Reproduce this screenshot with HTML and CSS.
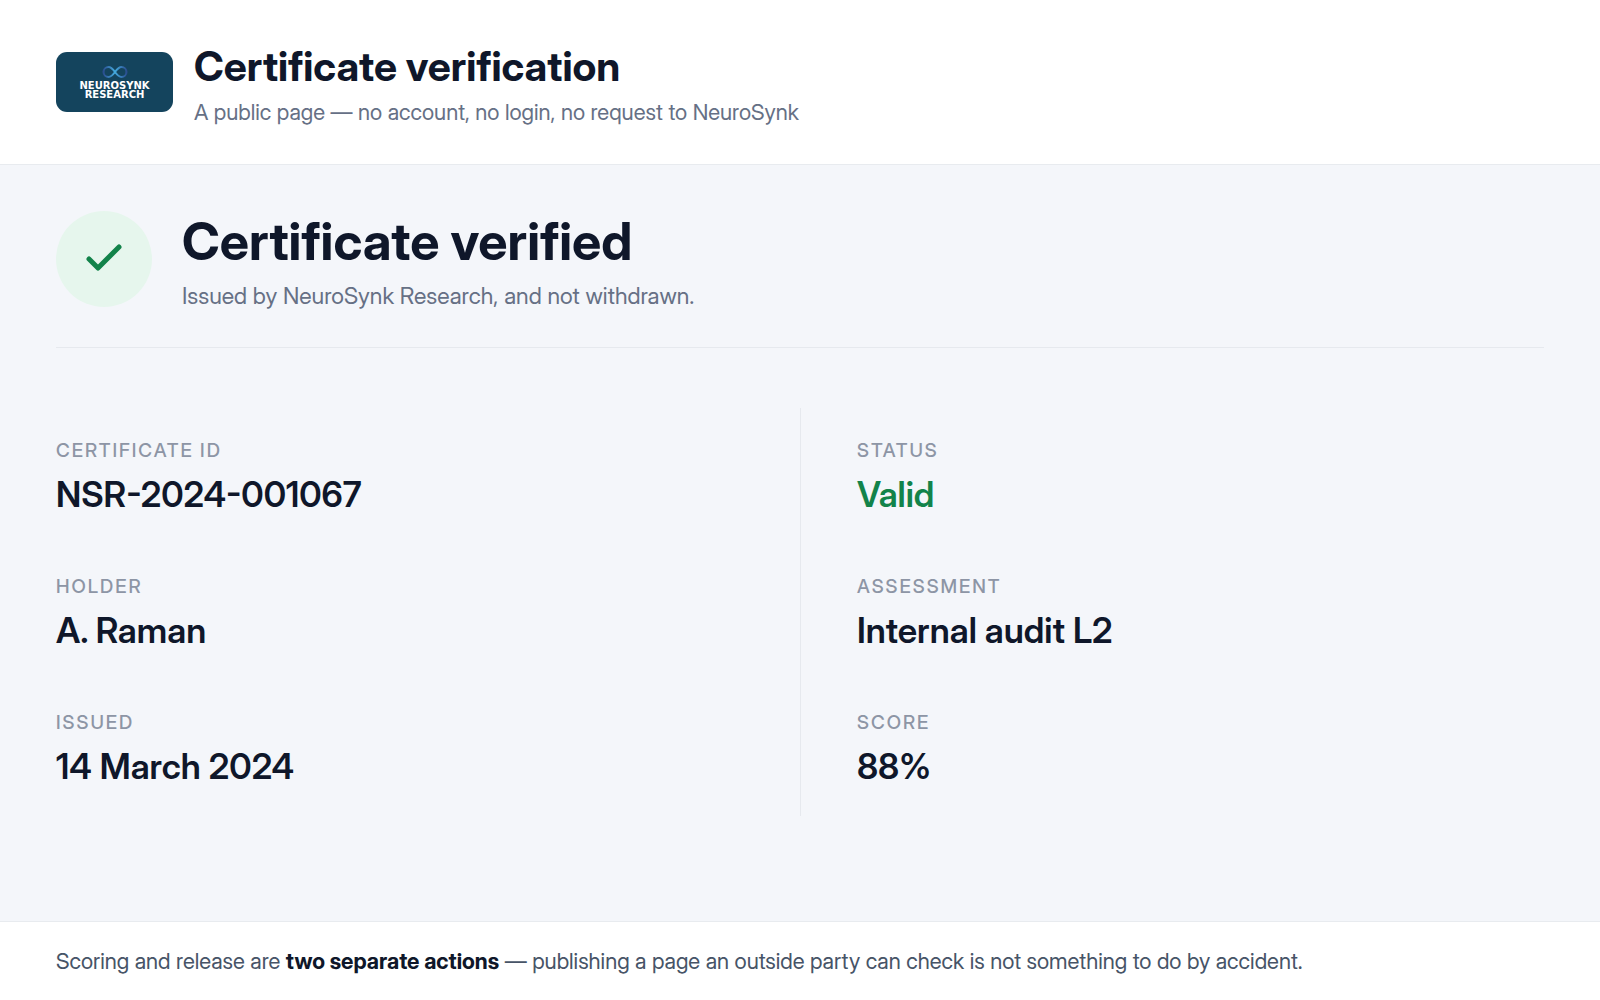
FILE: index.html
```html
<!DOCTYPE html>
<html lang="en">
<head>
    <meta charset="UTF-8">
    <meta name="viewport" content="width=device-width, initial-scale=1.0">
    <title>Certificate verification</title>
    <link rel="stylesheet" href="styles.css">
</head>

<body>
    <header class="site-header">
        <div class="logo">
            <svg class="logo-mark" viewBox="0 0 26 14" aria-hidden="true">
                <defs>
                    <linearGradient id="mark" x1="0" x2="1" y1="0" y2="0">
                        <stop offset="0" stop-color="#2b4f92"/>
                        <stop offset="0.5" stop-color="#45acdf"/>
                        <stop offset="1" stop-color="#2b4f92"/>
                    </linearGradient>
                </defs>
                <path d="M13 7C10 3 8.500 2 6.500 2a5 5 0 0 0 0 10C8.500 12 10 11 13 7s4.500-5 6.500-5a5 5 0 0 1 0 10C17.500 12 16 11 13 7Z" fill="none" stroke="url(#mark)" stroke-width="2"/>
            </svg>
            <span class="logo-text">NEUROSYNK<br>RESEARCH</span>
        </div>
        <div>
            <h1>Certificate verification</h1>
            <p class="tagline">A public page — no account, no login, no request to NeuroSynk</p>
        </div>
    </header>

    <main>
        <section class="result">
            <div class="result-icon">
                <svg viewBox="0 0 48 48" aria-hidden="true">
                    <path d="M9 24l9 9L39 12" fill="none" stroke="currentColor" stroke-width="5" stroke-linecap="round" stroke-linejoin="round"/>
                </svg>
            </div>
            <div>
                <h2>Certificate verified</h2>
                <p class="result-note">Issued by NeuroSynk Research, and not withdrawn.</p>
            </div>
        </section>

        <dl class="details">
            <div class="detail">
                <dt>Certificate ID</dt>
                <dd>NSR-2024-001067</dd>
            </div>
            <div class="detail">
                <dt>Status</dt>
                <dd class="valid">Valid</dd>
            </div>
            <div class="detail">
                <dt>Holder</dt>
                <dd>A. Raman</dd>
            </div>
            <div class="detail">
                <dt>Assessment</dt>
                <dd>Internal audit L2</dd>
            </div>
            <div class="detail">
                <dt>Issued</dt>
                <dd>14 March 2024</dd>
            </div>
            <div class="detail">
                <dt>Score</dt>
                <dd>88%</dd>
            </div>
        </dl>
    </main>

    <footer class="site-footer">
        <p>Scoring and release are <strong>two separate actions</strong> — publishing a page an outside party can check is not something to do by accident.</p>
    </footer>
</body>
</html>
```
FILE: styles.css
```css
* {
    box-sizing: border-box;
}

body {
    display: flex;
    flex-direction: column;
    min-height: 100vh;
    margin: 0;
    background-color: #f4f6fa;
    color: #0f172a;
    font-family: "Inter Display", Inter, sans-serif;
    font-variation-settings: "opsz" 32;
    font-size: 22px;
    line-height: 24px;
}

h1,
h2,
p,
dl,
dd {
    margin: 0;
}

/* Header */
.site-header {
    display: flex;
    align-items: center;
    gap: 21px;
    padding: 40px 56px;
    background-color: #ffffff;
    border-bottom: 1px solid #e8ebef;
}

.logo {
    display: flex;
    flex-direction: column;
    align-items: center;
    justify-content: center;
    gap: 2px;
    width: 117px;
    height: 60px;
    border-radius: 11px;
    background-color: #14445d;
    color: #ffffff;
}

.logo-mark {
    width: 26px;
    height: 14px;
}

.logo-text {
    font-family: "DejaVu Sans", sans-serif;
    font-size: 10px;
    font-weight: bold;
    line-height: 9px;
    text-align: center;
}

h1 {
    margin-bottom: 8px;
    font-size: 41px;
    font-weight: 700;
    line-height: 52px;
}

.tagline {
    color: #667085;
}

/* Verification result */
main {
    flex: 1;
    padding: 45px 56px;
}

.result {
    display: flex;
    align-items: center;
    gap: 30px;
    padding-bottom: 39px;
    border-bottom: 1px solid #e6e9ee;
}

.result-icon {
    display: flex;
    align-items: center;
    justify-content: center;
    width: 96px;
    height: 96px;
    border-radius: 50%;
    background-color: #e6f6ed;
    color: #12834a;
}

.result-icon svg {
    width: 48px;
    height: 48px;
}

h2 {
    margin-bottom: 10px;
    font-size: 52px;
    font-weight: 700;
    line-height: 64px;
}

.result-note {
    color: #667085;
    font-size: 23px;
}

/* Certificate details */
.details {
    display: grid;
    grid-template-columns: 1fr 1fr;
    margin-top: 60px;
}

.detail {
    padding: 30px 0;
}

.detail:nth-child(even) {
    padding-left: 56px;
    border-left: 1px solid #e6e9ee;
}

dt {
    margin-bottom: 10px;
    color: #8d95a5;
    font-size: 19px;
    font-weight: 500;
    line-height: 26px;
    letter-spacing: 2px;
    text-transform: uppercase;
}

dd {
    font-size: 35px;
    font-weight: 600;
    line-height: 40px;
}

.valid {
    color: #12834a;
}

/* Footer */
.site-footer {
    padding: 27px 56px;
    background-color: #ffffff;
    border-top: 1px solid #e8ebef;
    color: #475467;
}

.site-footer strong {
    color: #0f172a;
    font-weight: 700;
}
```
